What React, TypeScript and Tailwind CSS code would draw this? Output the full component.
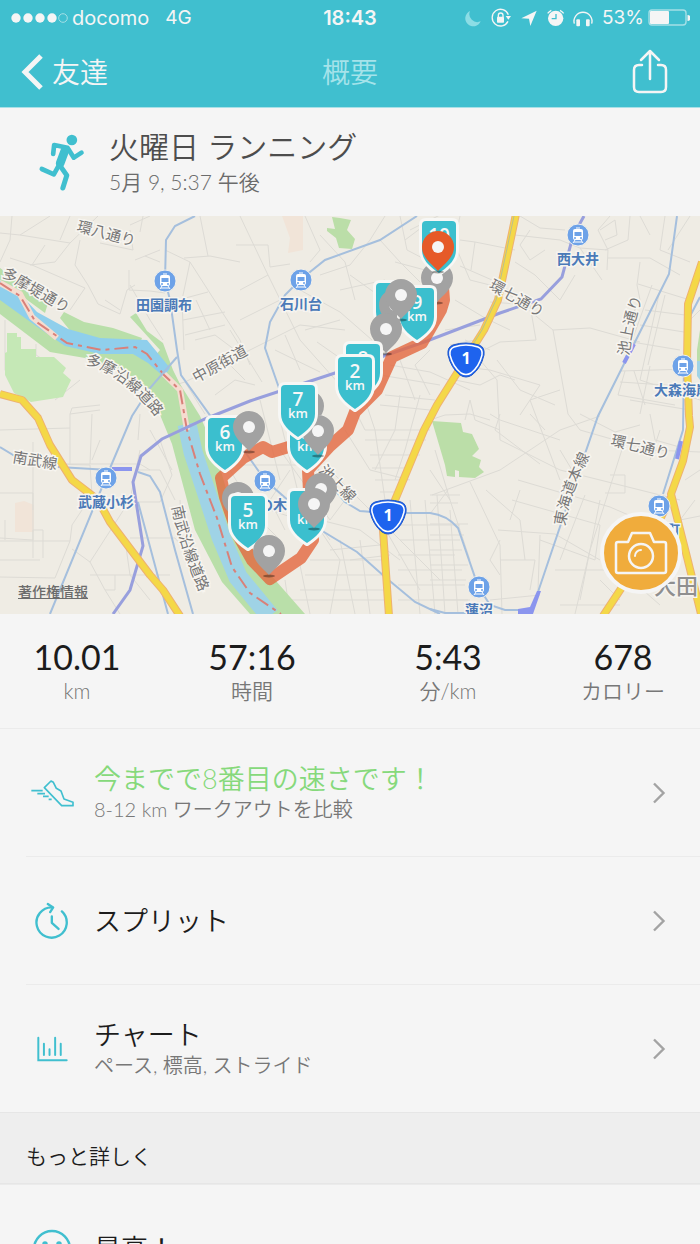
import { ReactNode } from "react";

type Point = { x: number; y: number };
type Marker = Point & { label: string };

const StatusIcons = () => {
  return (
    <svg viewBox="340 22 390 60" className="h-5 w-[130px]" fill="none" aria-hidden="true">
      <path d="M358 31A24 24 0 0 0 390 62A24 24 0 1 1 358 31Z" fill="#8cdde5" />
      <path d="M472 62A25 25 0 1 1 473 42" stroke="#f5f5f5" strokeWidth="4" />
      <path d="M465 46h16l-8 11z" fill="#f5f5f5" />
      <rect x="439" y="48" width="21" height="18" rx="2" fill="#f5f5f5" />
      <path d="M443 49v-5a7 7 0 0 1 14 0v5" stroke="#f5f5f5" strokeWidth="4" />
      <path d="M512 53L558 30L539 76L535 54Z" fill="#f5f5f5" />
      <circle cx="615" cy="53" r="23" fill="#f5f5f5" />
      <path d="M591 38A34 34 0 0 1 602 29M628 29A34 34 0 0 1 639 38" stroke="#f5f5f5" strokeWidth="4" />
      <path d="M616 40V54H603" stroke="#40bfcf" strokeWidth="4" />
      <path d="M671 69A27 27 0 1 1 723 69" stroke="#f5f5f5" strokeWidth="4" />
      <rect x="677" y="56" width="11" height="21" rx="3" fill="#f5f5f5" />
      <rect x="706" y="56" width="11" height="21" rx="3" fill="#f5f5f5" />
    </svg>
  );
};

const Battery = () => {
  return (
    <svg viewBox="0 0 42 18" className="h-[18px] w-[42px]" fill="none" aria-hidden="true">
      <rect x="1" y="1" width="37" height="15" rx="3" stroke="#a4dfe6" strokeWidth="1.4" />
      <rect x="2" y="2" width="19" height="13" rx="1" fill="#f5f5f5" />
      <path d="M39.500 6v6a3 3 0 0 0 0-6" fill="#f5f5f5" />
    </svg>
  );
};

const RunnerIcon = () => {
  return (
    <svg viewBox="110 403 140 177" className="h-[59px] w-[47px]" fill="none" stroke="#40bfcf" strokeLinecap="round" strokeLinejoin="round" aria-hidden="true">
      <circle cx="211" cy="424" r="16" fill="#40bfcf" stroke="none" />
      <path d="M155 466L158 439L198 447L217 477L240 462" strokeWidth="14" />
      <path d="M190 456L176 494" strokeWidth="26" />
      <path d="M172 500L157 527L121 511" strokeWidth="14" />
      <path d="M175 500L196 530L184 568" strokeWidth="15" />
    </svg>
  );
};

const ShoeIcon = () => {
  return (
    <svg viewBox="85 490 135 90" className="h-[30px] w-[45px]" fill="none" stroke="#40bfcf" strokeWidth="5" strokeLinejoin="round" aria-hidden="true">
      <path d="M148 499L155 503L164 521L178 529L187 553L214 563V573H180L128 519Z" />
      <path d="M89 528h34M107 537h23M124 545h17M141 554h9" />
    </svg>
  );
};

const SplitIcon = () => {
  return (
    <svg viewBox="100 145 107 113" className="h-[38px] w-9" fill="none" stroke="#40bfcf" strokeWidth="7" strokeLinecap="round" strokeLinejoin="round" aria-hidden="true">
      <path d="M183 173A45 45 0 1 1 154 161" />
      <path d="M141 151L157 161L148 175" />
      <path d="M153 188V207L173 225" />
    </svg>
  );
};

const ChartIcon = () => {
  return (
    <svg viewBox="112 546 94 78" className="h-[26px] w-[31px]" fill="none" stroke="#40bfcf" strokeWidth="6" strokeLinecap="round" aria-hidden="true">
      <path d="M116 551V619H202M133 569V603M150 586V603M167 551V603M184 569V603" />
    </svg>
  );
};

const SmileIcon = () => {
  return (
    <svg viewBox="0 0 40 40" className="size-10" fill="none" stroke="#40bfcf" strokeWidth="2.500" strokeLinecap="round" aria-hidden="true">
      <circle cx="20" cy="20" r="18" />
      <path d="M11 24a10 10 0 0 0 18 0" />
      <circle cx="13" cy="15" r="1.500" />
      <circle cx="27" cy="15" r="1.500" />
    </svg>
  );
};

const Chevron = () => {
  return (
    <svg viewBox="0 0 14 22" className="h-[22px] w-[14px]" fill="none" stroke="#a3a3a3" strokeWidth="2.400" aria-hidden="true">
      <path d="M2 1.500L11.500 11L2 20.500" />
    </svg>
  );
};

const streets = [
  "M12 216L10 240L0 262M0 233L20 235L70 243L98 216M20 235L50 216M70 243L55 262L30 265M70 216L60 240M130 230L133 250L100 243M10 258L32 265L85 288L70 310M32 265L45 245M80 240L75 265L88 285L98 304L120 314L127 290L135 285",
  "M143 216L140 232M150 216L130 225M165 250L190 262L240 340L250 365M184 258L210 256L240 262M200 216L208 256M190 262L182 300L184 350M129 270V290L150 291L165 293M135 260L160 250M130 285L150 320L163 340M145 256L160 262M178 300L208 292M183 320L225 312M185 335L225 325M196 300L210 330",
  "M240 216L268 275L240 290M236 245H268L270 267L290 264M268 275L300 340L340 385M300 290L340 312L372 340M230 330L262 382M240 320L280 300L320 300M250 350L300 325L345 330M285 335L300 370M305 330L340 320M317 342L360 372M275 350L320 372",
  "M305 216L320 250L310 262M320 235L345 262L355 300M385 216L370 240L350 265L320 275M380 240L400 262L420 282M400 216L407 250L430 262M350 275L385 300M340 290L385 280M410 230L440 215M455 245L470 280L510 290M405 240L425 225M395 262L425 270L428 290M460 216L455 240",
  "M460 240L475 242L515 250M475 242L471 270M460 266L492 280L553 330L590 328L640 342M553 330L568 414M490 302L530 305L536 340L500 342L480 352M515 235L560 240L580 248L608 250L607 270M610 216L598 230L608 250M630 216L628 240L605 250M515 262L535 275L560 300L575 275M455 300L485 318L510 330M640 262L637 285L640 300L622 335",
  "M580 248L602 280M608 258H650L680 275M638 284L690 300M660 290L640 380L700 400M645 310L685 315M640 325L684 332M632 342L680 350M652 285L625 360M665 295L648 365M620 371L690 369M625 371L618 395L675 405M634 371L645 405M650 366L640 414M620 382L680 386M630 400L690 410",
  "M454 366L490 370L540 385L520 415M480 360L497 380L500 440L560 470L680 500M497 360L520 390L555 405M560 390L530 400L545 440L560 480M568 414L580 430L650 450L700 452M580 414L615 432L640 425M500 414L495 430L540 464M490 414L500 420L560 440",
  "M432 495L500 470L560 430L600 416M430 470L450 500L470 560M430 514L448 490M470 482L500 545L502 614M486 490L520 520L525 560M520 490L510 520M512 500L600 525L595 560L540 540M518 480L610 507L640 520M498 530L555 534L600 560M585 495L560 560M540 535L538 590M610 475H625V493H605M600 500L580 600M625 440L590 550L575 614M560 605H620M555 570H620L660 605M620 600L600 580",
  "M430 495H460M430 503H458M430 524H468M430 535H464M430 550H462M430 565H468M430 580H466M437 495L445 614M450 510L458 614M430 600H470M435 450L450 500M500 560H535L530 590M500 540L490 560L500 575M490 600L540 595",
  "M350 400L365 430H430M360 385L375 430L385 500M345 430L370 470L410 480M365 440H426M370 455H420M372 468H412M375 480H408M380 492H402M400 395L395 430L375 470M420 395L405 450L395 480M340 480L400 540L440 580M330 470L380 520L420 590M320 520L360 530L400 560M410 500L420 614M425 500L435 614M400 525H460M400 540H460M398 555H455M398 570H462M398 585H465M398 600H468",
  "M320 530L340 560L330 614M340 540L355 614M360 540L370 614M310 560H385M305 575H385M300 590H388M285 600H388M300 565L310 614M285 580L290 614M330 550L380 545M350 560L390 555M280 420L300 500L330 540M260 400L280 480M230 470L260 520L280 540M240 500L300 520M250 415L240 440M290 470L270 500L285 530M235 465H300M280 450L330 520L345 500",
  "M0 493H33V540L0 538M33 442V510M33 530H43V558M33 530V558M5 520V540M0 541L70 541L55 578L0 577M70 541L72 525L92 495L90 465L52 464M60 464H140L150 470M70 414V464M92 414L90 464M72 549L90 562L105 590L120 614M90 562L130 500L140 450M115 575V590H105M130 538H175L185 550M130 502H160L172 475L160 440M140 414L138 440M150 430L172 470M180 500L182 540L200 560M90 575H170M0 430L70 428M70 414L100 410M0 560H40M125 540L130 575L150 600M138 470L160 470L175 500M100 440L92 460",
  "M70 414L72 408L100 405M105 300L120 310M36 344V355L60 370M5 320V370L14 385M55 400L80 380M140 395L185 382L250 350M185 382L205 414M195 340L215 335L235 350M200 370L225 360L245 380M215 395L235 380L255 385",
  "M430 420L445 415L470 414L490 420M455 380L480 385L500 375L515 380M470 400L475 420L500 430M465 340L490 350M465 420L470 400M390 365L430 372L470 390M380 375L440 385M385 395L435 400M400 360L415 400M430 350L415 365L430 395M380 405L430 410M445 330L480 325M450 345L475 340",
  "M665 216L660 250L690 262M690 216L668 250M640 216L650 235M600 230L615 220L617 235L605 240M520 216L540 228L565 230M530 230L520 245L530 260L545 250M700 310L690 320M650 414L655 440L690 450M660 430L650 460M700 470L685 480M695 500L680 520L700 516M560 450L572 470M530 414L545 430",
];

const rails = [
  "M195 216L175 226L166 240L165 280L170 300L177 350L181 375L212 418L245 452L265 480L290 502L324 532L357 552L385 577L415 602L440 614",
  "M177 357L150 388L132 416L105 480L50 614",
  "M417 216L380 240L325 260L300 280L285 295L270 322L265 348L279 388",
  "M318 470L345 502L360 511L385 513H430Q447 515 458 528L478 586L490 605L505 610H525",
  "M430 609L445 613H490",
  "M677 216L669 274L598 416L565 512L538 592",
  "M0 447L18 458M58 467L110 470M138 472L150 476L160 492L175 550L193 614M138 502L168 614",
  "M700 297L688 320L684 366L683 430L663 494",
];

const highways = [
  "M0 394L22 400L38 418L50 445L72 480L98 500L110 522L150 575L163 590L180 616",
  "M516 214L498 300L484 330L437 405L424 430L395 500L383 530L389 616",
  "M702 262L688 304L687 363L689 416L690 427L683 461L671 494L687 557L702 618",
  "M671 497L640 560L603 616",
];

const stations: (Point & { name: string; lx: number; ly: number; anchor?: "middle" | "start" })[] = [
  { x: 165, y: 281, name: "田園調布", lx: 164, ly: 310 },
  { x: 301, y: 280, name: "石川台", lx: 301, ly: 309 },
  { x: 578, y: 235, name: "西大井", lx: 578, ly: 264 },
  { x: 683, y: 366, name: "大森海岸", lx: 654, ly: 395, anchor: "start" },
  { x: 106, y: 478, name: "武蔵小杉", lx: 106, ly: 507 },
  { x: 265, y: 481, name: "の木", lx: 273, ly: 510 },
  { x: 479, y: 587, name: "蓮沼", lx: 479, ly: 615 },
  { x: 659, y: 506, name: "大森町", lx: 659, ly: 535 },
];

const roadNames = [
  { id: "kanpachi", name: "環八通り", d: "M76 231L140 248", size: 15 },
  { id: "tamazutsumi", name: "多摩堤通り", d: "M1 276L72 317", size: 15 },
  { id: "tamaensen", name: "多摩沿線道路", d: "M85 364Q128 376 164 428", size: 15 },
  { id: "nakahara", name: "中原街道", d: "M196 383L258 349", size: 15 },
  { id: "kannana1", name: "環七通り", d: "M488 288L548 322", size: 15 },
  { id: "ikegami", name: "池上通り", d: "M629 356Q632 325 645 290", size: 15 },
  { id: "kannana2", name: "環七通り", d: "M610 445L676 461", size: 15 },
  { id: "nanbu", name: "南武線", d: "M12 462L66 471", size: 15 },
  { id: "nanbuensen", name: "南武沿線道路", d: "M172 507Q180 550 205 604", size: 15 },
  { id: "tokaido", name: "東海道本線", d: "M565 526Q570 490 596 444", size: 15 },
  { id: "ikegamisen", name: "池上線", d: "M318 471L360 514", size: 15 },
];

const RoadName = ({ id, name, d, size }: { id: string; name: string; d: string; size: number }) => {
  return (
    <g>
      <path id={id} d={d} fill="none" />
      <text fontSize={size} fill="#777" stroke="#f7f5f0" strokeWidth="3" paintOrder="stroke">
        <textPath href={`#${id}`}>{name}</textPath>
      </text>
    </g>
  );
};

const Station = ({ x, y }: Point) => {
  return (
    <g transform={`translate(${x} ${y})`}>
      <circle r="11" fill="#6da2e8" stroke="#f4f1ea" strokeWidth="1" />
      <rect x="-5" y="-6" width="10" height="11" rx="2" fill="#fff" />
      <rect x="-3.500" y="-3" width="7" height="4" fill="#6da2e8" />
      <circle cx="-3" cy="3" r="1" fill="#6da2e8" />
      <circle cx="3" cy="3" r="1" fill="#6da2e8" />
      <path d="M-2 -7H2M-3 5L-5 8M3 5L5 8M-4 7H4" stroke="#fff" strokeWidth="1" />
    </g>
  );
};

const RouteShield = ({ x, y }: Point) => {
  return (
    <g transform={`translate(${x} ${y})`}>
      <path d="M-13 -15Q0 -19 13 -15Q19 -13 18 -5Q15 8 6 15Q0 19 -6 15Q-15 8 -18 -5Q-19 -13 -13 -15Z" fill="#1e63ee" stroke="#2057c8" strokeWidth="1" />
      <path d="M-12 -13Q0 -17 12 -13Q17 -11 16 -5Q13 7 5 13Q0 16 -5 13Q-13 7 -16 -5Q-17 -11 -12 -13Z" fill="none" stroke="#fff" strokeWidth="1.500" />
      <text y="4" textAnchor="middle" fontSize="16" fontWeight="700" fill="#fff" className="font-['Open_Sans',sans-serif]">1</text>
    </g>
  );
};

const KmMarker = ({ x, y, label }: Marker) => {
  return (
    <g transform={`translate(${x} ${y})`} className="font-['Open_Sans',sans-serif]">
      <path
        d="M-17 4Q-17 0 -13 0H13Q17 0 17 4V29C17 39 9 46 0 52C-9 46 -17 39 -17 29Z"
        fill="#3bbfce"
        stroke="#f7f7f5"
        strokeWidth="6"
        strokeLinejoin="round"
        paintOrder="stroke"
      />
      <text y="21" textAnchor="middle" fontSize="19" fontWeight="600" fill="#f7f7f7">{label}</text>
      <text y="33" textAnchor="middle" fontSize="13" fontWeight="600" fill="#f7f7f7">km</text>
    </g>
  );
};

const Pin = ({ x, y, color = "#a2a2a2" }: Point & { color?: string }) => {
  return (
    <g transform={`translate(${x} ${y})`}>
      <ellipse cy="25" rx="6" ry="1.500" fill="#000" opacity="0.35" />
      <path d="M0 24C-5 18 -16 11 -16 0A16 16 0 1 1 16 0C16 11 5 18 0 24Z" fill={color} />
      <circle r="6" fill="#f5f5f5" />
    </g>
  );
};

const RouteMap = () => {
  return (
    <svg viewBox="0 216 700 398" className="block h-auto w-full bg-[#efece4] font-['Noto_Sans_CJK_JP',sans-serif] font-normal" role="img" aria-label="ランニングのルート">
      <g fill="#f1e4d8">
        <path d="M282 216H303V250L288 253L290 238Z" />
        <path d="M15 503L24 501L34 505V532H15Z" />
      </g>
      <g fill="none" stroke="#dddbd5" strokeWidth="1">
        {streets.map((d, index) => <path key={index} d={d} />)}
      </g>
      <g fill="#bbdea8">
        <path d="M332 217L340 218L351 220L347 230L355 239L352 249L339 248L336 238L327 231V228L335 229Z" />
        <path d="M432 421L461 423L463 432L472 434L479 449L472 456L481 460L479 467L484 472L475 478L459 477V471L455 470V477L447 476L445 465Z" />
        <path d="M700 330L697 350V361H700Z" />
      </g>
      <path d="M700 361H697V376L700 380Z" fill="#9fd3e6" />
      <path d="M7 333H17V337H21V349H36V357H54L66 368L63 373L71 380L63 397L31 402L14 393L5 375V353L7 352Z" fill="#c5e8b6" />
      <g fill="#b9dfa9">
        <path d="M0 268L48 303L45 313L0 280Z" />
        <path d="M64 312L84 322L113 328L142 338L139 346L106 346L76 338L60 318Z" />
        <path d="M0 293L40 322L75 348L110 352L140 350L150 362L160 350L130 317L136 313L147 331L163 343L173 370L180 384L200 416L215 450L235 520L262 565L305 614H250L222 582L195 530L172 444L158 410L142 384L122 370L100 364L85 358L50 352L0 314Z" />
      </g>
      <path d="M0 281L20 294L37 312L68 329L100 338L147 340L170 368L164 377L148 363L133 354L100 354L65 346L36 326L0 300Z" fill="#8fcfec" />
      <path d="M187 424L193 452L206 491L221 537L238 577L270 616" fill="none" stroke="#9fd3e6" strokeWidth="19" />
      <path d="M0 283L20 294L32 317L57 338M164 374L180 390L187 430" fill="none" stroke="#f5dcd0" strokeWidth="6" />
      <path d="M0 283L20 296L35 321L67 343L102 350L135 347L147 354L164 375L180 390L187 430L200 474L217 518L232 567L250 593L281 614" fill="none" stroke="#d98079" strokeWidth="2" strokeDasharray="14 5 4 5" />
      <g fill="none" stroke="#a5bfdd" strokeWidth="2">
        {rails.map((d, index) => <path key={index} d={d} />)}
      </g>
      <path d="M113 614L130 590L143 546L133 482L141 456L162 439L205 419L250 401L335 373L427 341L500 313L541 299L562 277L573 236L584 216" fill="none" stroke="#989fdd" strokeWidth="3" />
      <g fill="none" strokeLinejoin="round">
        {highways.map((d, index) => <path key={index} d={d} stroke="#eeb171" strokeWidth="8" />)}
        {highways.map((d, index) => <path key={index} d={d} stroke="#f4d848" strokeWidth="6" />)}
      </g>
      <path d="M514 216L496 300L482 330L465 357" fill="none" stroke="#b9bd93" strokeWidth="1" />
      <path d="M112 469H132M634 344L624 363M681 441L677 459" fill="none" stroke="#8b95ee" strokeWidth="4" />
      <path d="M541 591L533 614H518V609L530 607L537 591Z" fill="#8b95ee" />

      {roadNames.map((road) => <RoadName key={road.id} {...road} />)}
      {stations.map(({ x, y, name, lx, ly, anchor }) => (
        <g key={name}>
          <Station x={x} y={y} />
          <text x={lx} y={ly} textAnchor={anchor ?? "middle"} fontSize="14" fontWeight="700" fill="#4b7ab8" stroke="#f6f4f0" strokeWidth="3" paintOrder="stroke">{name}</text>
        </g>
      ))}
      <text x="654" y="594" fontSize="22" fontWeight="500" fill="#8f8f8f" stroke="#f6f4f0" strokeWidth="3" paintOrder="stroke">大田</text>
      <RouteShield x={466} y={360} />
      <RouteShield x={388} y={517} />

      <path
        d="M442 275L444 300L441 310L422 343L392 357L377 390L355 412L348 430L330 446L308 470L309 492L313 540L301 558L270 579L252 560L238 535L225 497L221 478L243 458L263 447L272 452L292 446L325 440"
        fill="none"
        stroke="#e4683f"
        strokeOpacity="0.8"
        strokeWidth="12"
        strokeLinejoin="round"
      />

      <Pin x={437} y={278} />
      <KmMarker x={439} y={221} label="10" />
      <Pin x={438} y={247} color="#e65a28" />
      <KmMarker x={393} y={283} label="1" />
      <Pin x={395} y={305} />
      <KmMarker x={417} y={288} label="9" />
      <Pin x={401} y={295} />
      <Pin x={386} y={329} />
      <KmMarker x={363} y={344} label="8" />
      <KmMarker x={355} y={357} label="2" />
      <Pin x={308} y={406} />
      <KmMarker x={307} y={418} label="3" />
      <Pin x={318} y={431} />
      <KmMarker x={298} y={385} label="7" />
      <KmMarker x={225} y={418} label="6" />
      <Pin x={249} y={427} />
      <Pin x={238} y={498} />
      <KmMarker x={248} y={496} label="5" />
      <KmMarker x={307} y={491} label="4" />
      <Pin x={321} y={489} />
      <Pin x={314} y={504} />
      <Pin x={269} y={551} />
    </svg>
  );
};

const stats = [
  { value: "10.01", unit: "km" },
  { value: "57:16", unit: "時間" },
  { value: "5:43", unit: "分/km" },
  { value: "678", unit: "カロリー" },
];

type RowProps = {
  icon: ReactNode;
  title: string;
  subtitle?: string;
  highlight?: boolean;
  chevron?: boolean;
};

const Row = ({ icon, title, subtitle, highlight, chevron = true }: RowProps) => {
  return (
    <li className="ml-[26px] border-t border-[#ebebeb] first:ml-0 first:pl-[26px]">
      <button type="button" className="flex h-[127px] w-full cursor-pointer items-center gap-4 pr-[34px] text-left">
        <span className="flex w-[52px] shrink-0 justify-center">{icon}</span>
        <span className="flex min-w-0 grow flex-col">
          <span className={`text-[27px] leading-8 ${highlight ? "text-[#86d97b]" : "text-[#1c1c1c]"}`}>{title}</span>
          {subtitle && <span className="text-[20px] leading-7 text-[#777]">{subtitle}</span>}
        </span>
        {chevron && <Chevron />}
      </button>
    </li>
  );
};

const App = () => {
  return (
    <div className="h-screen overflow-y-auto bg-[#f5f5f5] font-['Lato','Noto_Sans_CJK_JP',sans-serif] font-[350] [scrollbar-width:none]">
      <header className="border-b border-[#a9e0e7] bg-[#40bfcf] text-[#f5f5f5]">
        <div className="grid h-9 grid-cols-[1fr_auto_1fr] items-center px-[10px] font-['Inter',sans-serif] text-[20px] font-normal">
          <div className="flex items-center gap-1">
            <svg viewBox="0 0 58 12" className="h-3 w-[58px]" fill="#f5f5f5" aria-hidden="true">
              <circle cx="6" cy="6" r="4.700" />
              <circle cx="18" cy="6" r="4.700" />
              <circle cx="30" cy="6" r="4.700" />
              <circle cx="42" cy="6" r="4.700" />
              <circle cx="53" cy="6" r="4.300" fill="none" stroke="#a4dfe6" />
            </svg>
            <span>docomo</span>
            <span className="ml-3 text-[19px]">4G</span>
          </div>
          <span className="font-semibold">18:43</span>
          <div className="flex items-center justify-end">
            <StatusIcons />
            <span className="mr-1 ml-2 text-[19px]">53%</span>
            <Battery />
          </div>
        </div>
        <div className="grid h-[71px] grid-cols-[1fr_auto_1fr] items-center px-5 text-[28px]">
          <button type="button" className="flex cursor-pointer items-center gap-2 justify-self-start">
            <svg viewBox="0 0 24 36" className="h-9 w-6" fill="none" stroke="#f5f5f5" strokeWidth="5" aria-hidden="true">
              <path d="M21 2L5 18L21 34" />
            </svg>
            友達
          </button>
          <h1 className="text-[#a5e3ea]">概要</h1>
          <button type="button" aria-label="共有" className="mr-3 cursor-pointer justify-self-end">
            <svg viewBox="0 0 36 46" className="h-[46px] w-9" fill="none" stroke="#f5f5f5" strokeWidth="2.500" strokeLinecap="round" strokeLinejoin="round" aria-hidden="true">
              <path d="M10 16H7Q2 16 2 21V38Q2 43 7 43H29Q34 43 34 38V21Q34 16 29 16H26" />
              <path d="M18 30V3M9 11L18 2L27 11" />
            </svg>
          </button>
        </div>
      </header>

      <section className="flex h-[108px] items-center gap-6 pl-[38px]">
        <RunnerIcon />
        <div>
          <h2 className="text-[30px] leading-10 text-[#4d4d4d]">火曜日 ランニング</h2>
          <p className="text-[21px] leading-8 text-[#6b6b6b]">5月 9, 5:37 午後</p>
        </div>
      </section>

      <section className="relative">
        <RouteMap />
        <a href="#copyright" className="absolute bottom-3 left-[18px] font-['Noto_Sans_CJK_JP',sans-serif] text-[14px] font-medium text-[#6b6b6b] underline">著作権情報</a>
        <button type="button" aria-label="写真を追加" className="absolute right-[18px] bottom-5 flex size-[82px] cursor-pointer items-center justify-center rounded-full border-4 border-[#f5f5f5] bg-[#f0ac3c]">
          <svg viewBox="0 0 54 46" className="h-[46px] w-[54px]" fill="none" stroke="#f5f5f5" strokeWidth="2.500" strokeLinejoin="round" aria-hidden="true">
            <path d="M4 12H14L18 3H36L40 12H50Q52 12 52 14V41Q52 43 50 43H4Q2 43 2 41V14Q2 12 4 12Z" />
            <circle cx="27" cy="26" r="12" />
            <path d="M21 26A6 6 0 0 1 27 20" strokeLinecap="round" strokeWidth="2" />
          </svg>
        </button>
      </section>

      <dl className="grid h-[114px] grid-cols-[22%_28%_28%_22%] items-center text-center">
        {stats.map(({ value, unit }) => (
          <div key={unit} className="flex flex-col-reverse">
            <dt className="text-[21px] leading-7 text-[#777]">{unit}</dt>
            <dd className="text-[34px] leading-10 font-normal text-[#1c1c1c]">{value}</dd>
          </div>
        ))}
      </dl>

      <ul>
        <Row icon={<ShoeIcon />} title="今までで8番目の速さです！" subtitle="8-12 km ワークアウトを比較" highlight />
        <Row icon={<SplitIcon />} title="スプリット" />
        <Row icon={<ChartIcon />} title="チャート" subtitle="ペース, 標高, ストライド" />
      </ul>

      <h3 className="flex h-[72px] items-center border-y border-[#e6e6e6] bg-[#eee] pt-4 pl-[26px] text-[21px] text-[#1c1c1c]">もっと詳しく</h3>

      <ul>
        <Row icon={<SmileIcon />} title="最高！" chevron={false} />
      </ul>
    </div>
  );
};

export default App;
